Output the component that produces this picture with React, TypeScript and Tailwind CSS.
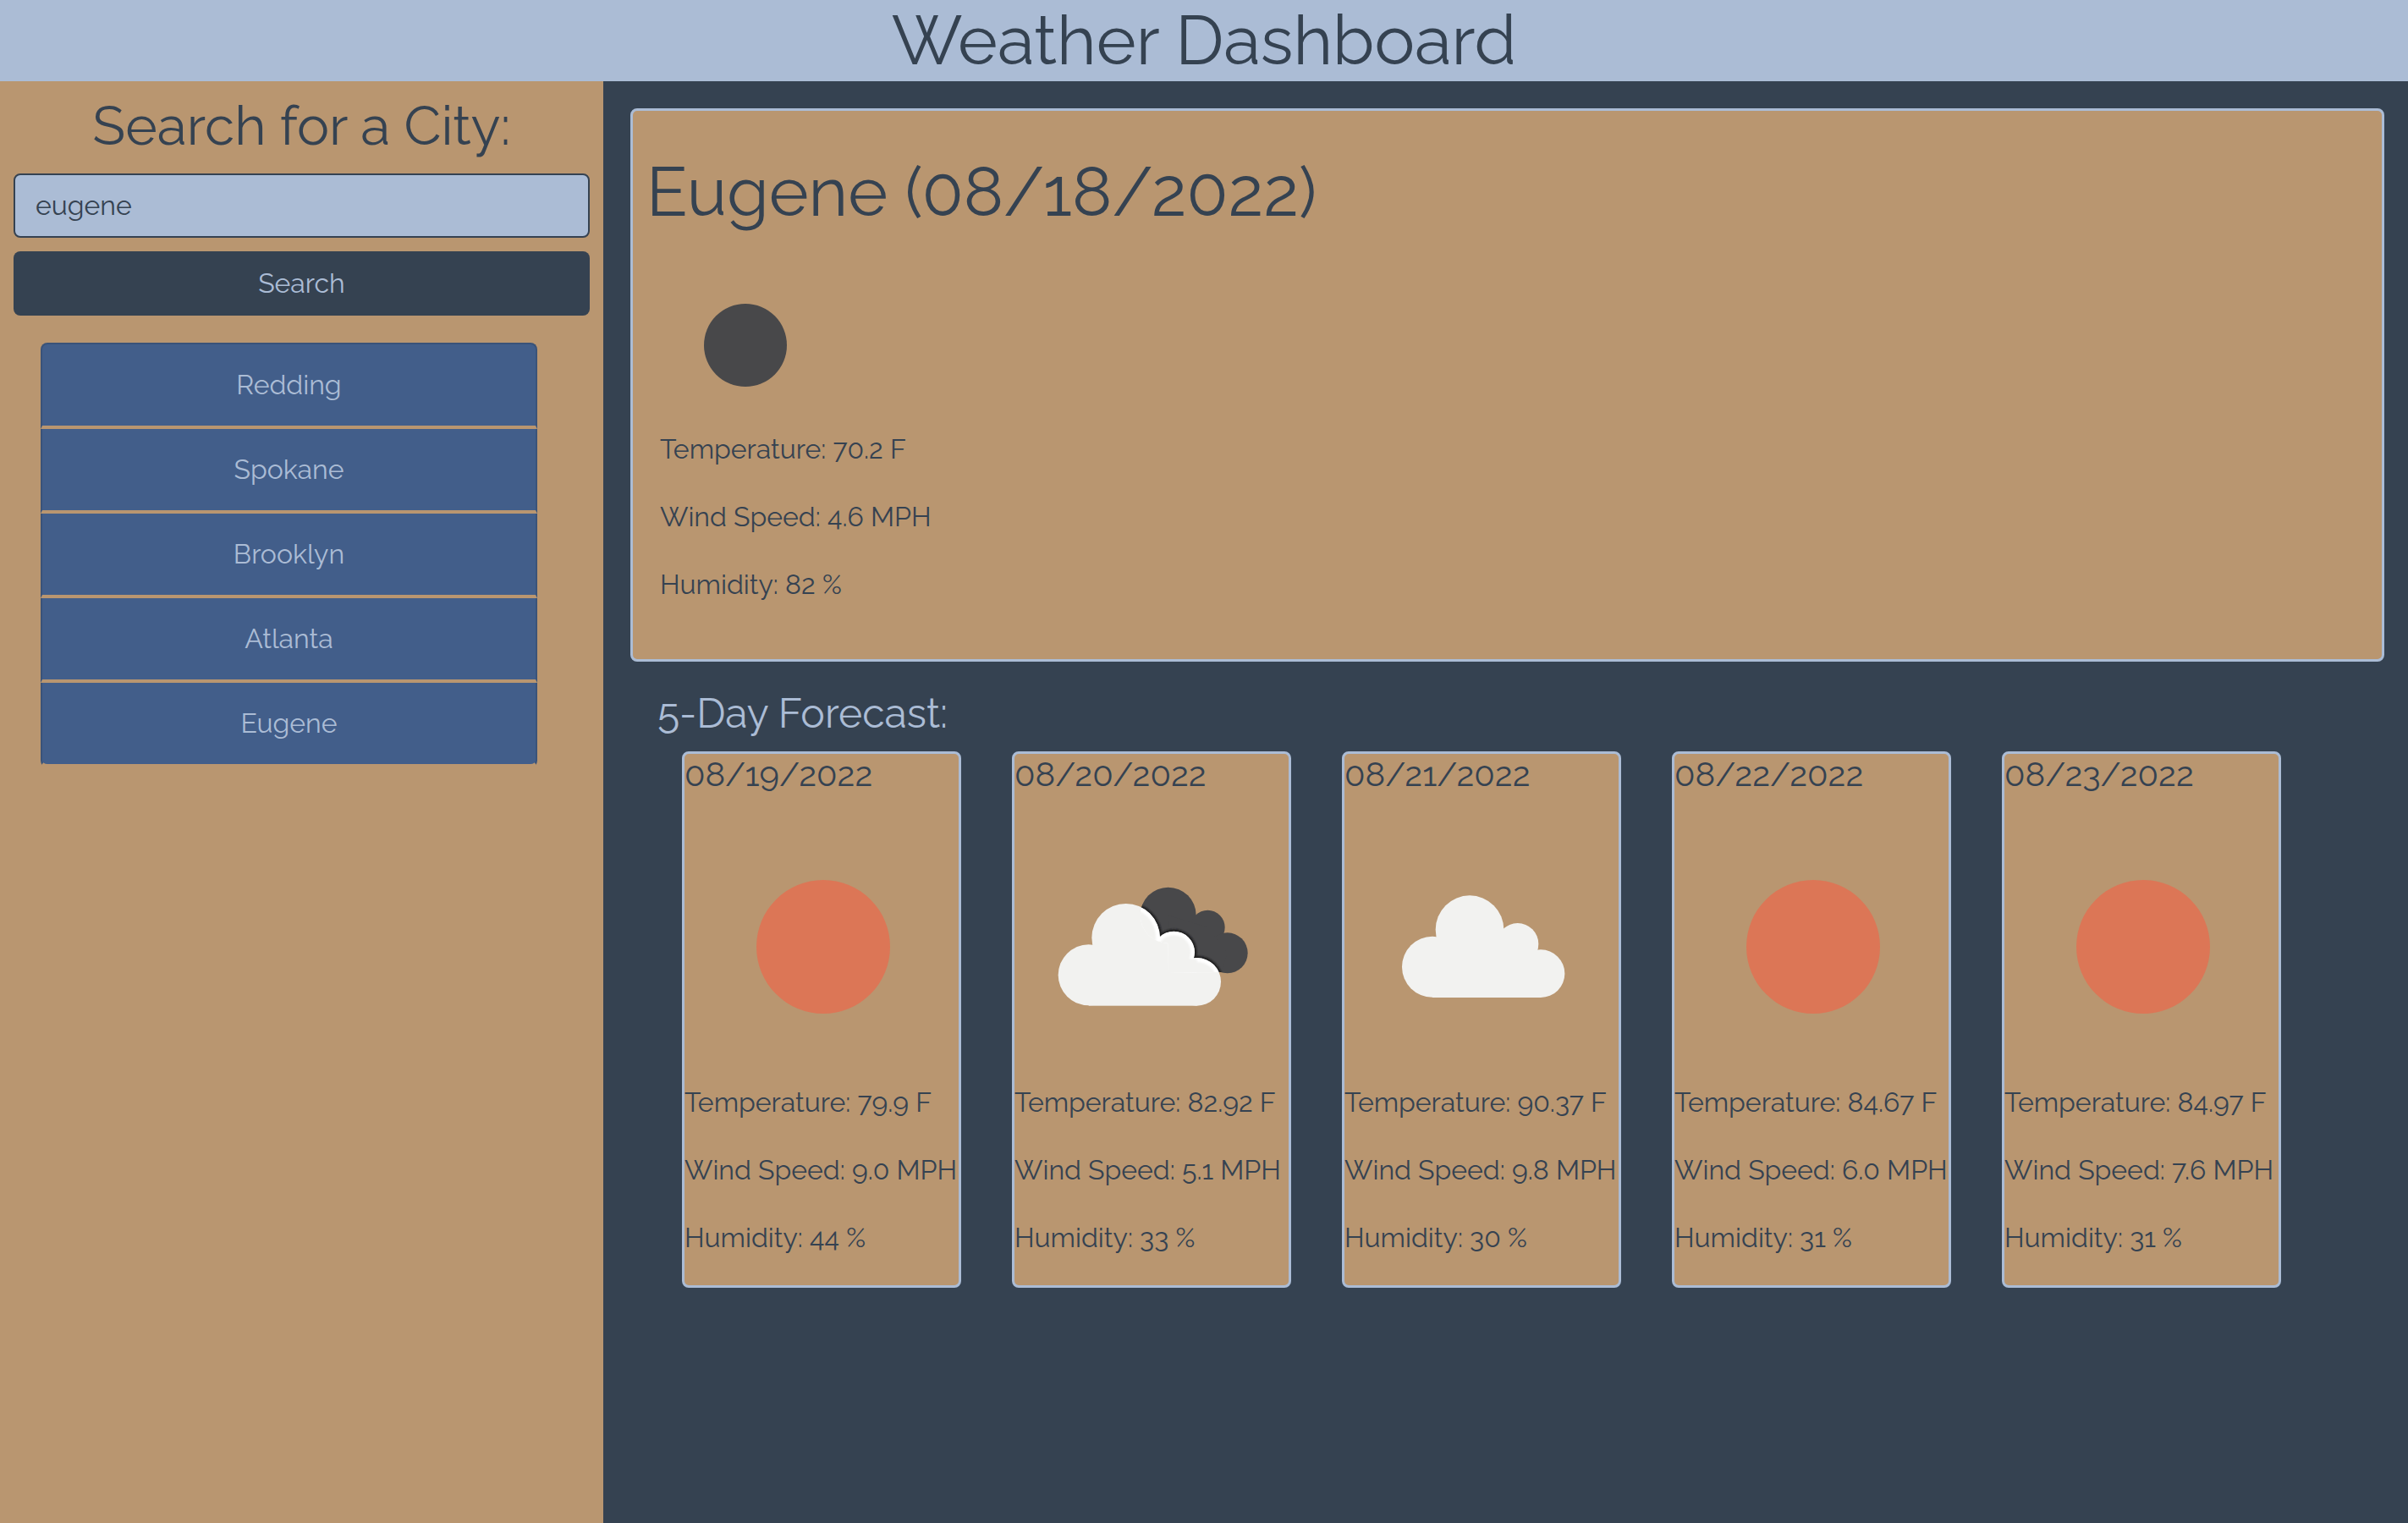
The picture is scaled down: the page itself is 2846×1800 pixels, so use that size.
import { useState } from "react";

type Sky = "sun" | "broken" | "cloud";

interface Day {
  date: string;
  sky: Sky;
  temp: string;
  wind: string;
  humidity: string;
}

const cities = ["Redding", "Spokane", "Brooklyn", "Atlanta", "Eugene"];

const days: Day[] = [
  { date: "08/19/2022", sky: "sun", temp: "79.9", wind: "9.0", humidity: "44" },
  { date: "08/20/2022", sky: "broken", temp: "82.92", wind: "5.1", humidity: "33" },
  { date: "08/21/2022", sky: "cloud", temp: "90.37", wind: "9.8", humidity: "30" },
  { date: "08/22/2022", sky: "sun", temp: "84.67", wind: "6.0", humidity: "31" },
  { date: "08/23/2022", sky: "sun", temp: "84.97", wind: "7.6", humidity: "31" },
];

/* The cloud outline, grown (or shrunk) by `grow` on every side. */
function frontShapes(grow = 0) {
  return (
    <>
      <circle cx="320" cy="457" r={108 + grow} />
      <circle cx="452" cy="325" r={121 + grow} />
      <circle cx="622" cy="376" r={74 + grow} />
      <circle cx="704" cy="481" r={85 + grow} />
      <rect x="320" y="400" width="384" height="166" />
      <rect x="452" y="340" width="180" height="150" />
    </>
  );
}

const backShapes = (
  <>
    <circle cx="602" cy="245" r="99" />
    <circle cx="742" cy="288" r="61" />
    <circle cx="812" cy="379" r="72" />
    <polygon points="602,245 742,288 812,379 790,447 600,450" />
  </>
);

function SkyIcon({ sky }: { sky: Sky }) {
  if (sky === "sun") {
    return (
      <svg viewBox="0 0 324 324" className="block w-full" role="img" aria-label="Clear sky">
        <circle cx="164" cy="164" r="79" fill="#dc7656" />
      </svg>
    );
  }
  if (sky === "cloud") {
    return (
      <svg viewBox="8 -106 972 972" className="block w-full" role="img" aria-label="Cloudy">
        <g fill="#f2f2f0">{frontShapes()}</g>
      </svg>
    );
  }
  return (
    <svg viewBox="57 -135 972 972" className="block w-full" role="img" aria-label="Broken clouds">
      <defs>
        <clipPath id="back-cloud">{backShapes}</clipPath>
        <clipPath id="front-cloud">{frontShapes()}</clipPath>
        <filter id="soften" x="-10%" y="-10%" width="120%" height="120%">
          <feGaussianBlur stdDeviation="3" />
        </filter>
      </defs>
      <g fill="#48484a">{backShapes}</g>
      <g clipPath="url(#back-cloud)">
        <g fill="#1c1c1f" filter="url(#soften)">
          {frontShapes(7)}
        </g>
      </g>
      <g fill="#f2f2f0">{frontShapes()}</g>
      <g clipPath="url(#front-cloud)">
        <g clipPath="url(#back-cloud)">
          <g fill="#ffffff">{frontShapes()}</g>
          <g fill="#f2f2f0" filter="url(#soften)">
            {frontShapes(-14)}
          </g>
        </g>
      </g>
    </svg>
  );
}

function Readings({ temp, wind, humidity }: { temp: string; wind: string; humidity: string }) {
  return (
    <>
      <p className="mb-8 whitespace-nowrap">Temperature: {temp} F</p>
      <p className="mb-8 whitespace-nowrap">Wind Speed: {wind} MPH</p>
      <p className="mb-8 whitespace-nowrap">Humidity: {humidity} %</p>
    </>
  );
}

export default function App() {
  const [city, setCity] = useState("eugene");

  return (
    <div className="flex min-h-screen flex-col bg-[#354251] font-['Raleway','Lato',sans-serif] text-[32px] leading-[48px] text-[#354251] oldstyle-nums">
      <header className="bg-[#abbcd5] text-center">
        <h1 className="text-[80px] leading-[96px]">Weather Dashboard</h1>
      </header>

      <div className="flex flex-1">
        <aside className="w-[25.05%] bg-[#b99670] px-4 pt-4">
          <form onSubmit={(e) => e.preventDefault()}>
            <label htmlFor="city" className="mb-5 block text-center text-[64px] leading-[73px]">
              Search for a City:
            </label>
            <input
              id="city"
              type="text"
              value={city}
              onChange={(e) => setCity(e.target.value)}
              className="mb-4 block h-[76px] w-full rounded-lg border-2 border-[#354251] bg-[#abbcd5] px-6 pb-0.5 outline-none"
            />
            <button type="submit" className="block h-[76px] w-full rounded-lg bg-[#354251] text-[#abbcd5]">
              Search
            </button>
          </form>

          <ul className="mt-8 mr-[62px] ml-8">
            {cities.map((name) => (
              <li
                key={name}
                className="border-x-2 border-b-4 border-[#3a5379] border-b-[#b99670] bg-[#425e8a] first:rounded-t-lg first:border-t-2 last:rounded-b-lg"
              >
                <button type="button" className="block w-full py-6 text-[#abbcd5]">
                  {name}
                </button>
              </li>
            ))}
          </ul>
        </aside>

        <main className="flex-1 pt-8 pr-7 pl-8">
          <section className="rounded-lg border-3 border-[#abbcd5] bg-[#b99670] pt-12 pb-8 pl-4">
            <h2 className="text-[80px] leading-[96px]">Eugene (08/18/2022)</h2>
            <div className="mt-8 pl-4">
              <svg viewBox="0 0 200 200" className="block size-[200px]" role="img" aria-label="Clear night">
                <circle cx="101" cy="101" r="49" fill="#48484a" />
              </svg>
              <Readings temp="70.2" wind="4.6" humidity="82" />
            </div>
          </section>

          <section>
            <h3 className="mt-8 mb-4 pl-8 text-[48px] leading-[58px] text-[#abbcd5]">5-Day Forecast:</h3>
            <div className="mr-[122px] ml-[61px] grid grid-cols-5 gap-[60px]">
              {days.map((d) => (
                <article key={d.date} className="rounded-lg border-3 border-[#abbcd5] bg-[#b99670]">
                  <h4 className="mb-4 text-[40px] leading-[48px]">{d.date}</h4>
                  <SkyIcon sky={d.sky} />
                  <Readings temp={d.temp} wind={d.wind} humidity={d.humidity} />
                </article>
              ))}
            </div>
          </section>
        </main>
      </div>
    </div>
  );
}
